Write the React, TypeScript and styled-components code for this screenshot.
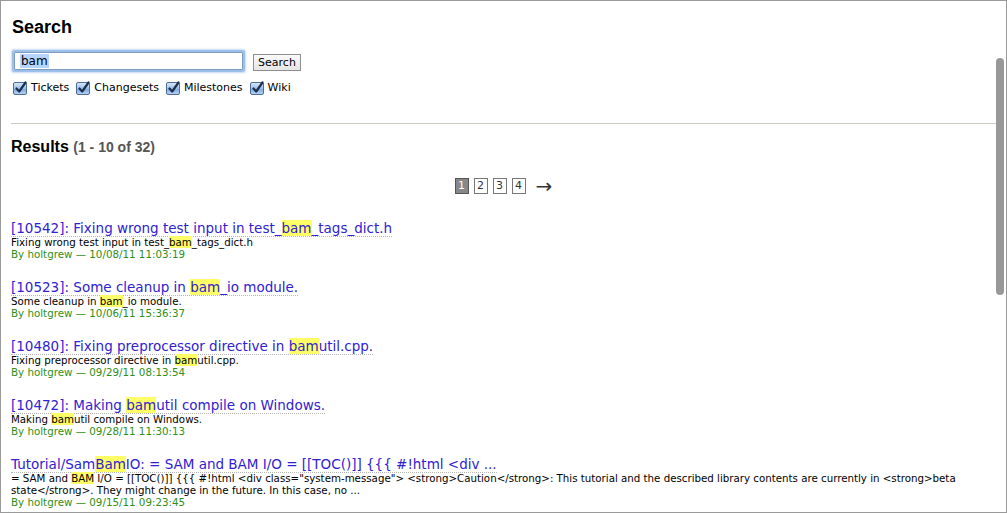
import React from "react";
import styled, { createGlobalStyle } from "styled-components";

const Global = createGlobalStyle`
  html, body { margin: 0; padding: 0; background: #fff; }
  body { font-family: "DejaVu Sans", Verdana, sans-serif; }
`;

const Frame = styled.div`
  position: relative;
  box-sizing: border-box;
  width: 1007px;
  height: 513px;
  overflow: hidden;
  border: 1px solid #9a9a9a;
  padding: 15px 10px 0 10px;
  background: #fff;
  color: #000;
`;

const Heading = styled.h1`
  margin: 0 0 0 1px;
  font: bold 18px/22px "Liberation Sans", Arial, sans-serif;
`;

const FieldRow = styled.div`
  display: flex;
  align-items: flex-start;
  gap: 10px;
  margin: 14px 0 0 3px;
`;

const SearchField = styled.div`
  box-sizing: border-box;
  width: 229px;
  height: 18px;
  border: 1px solid #7d9cbf;
  box-shadow: 0 0 0 2px #9cc0ea, 0 0 2px 3px #c6dbf3;
  border-radius: 1px;
  padding: 2px 0 0 5px;
  font: 12px/12px "DejaVu Sans", Verdana, sans-serif;
  color: #000;
`;

const Selected = styled.span`
  background: #b5d5ff;
  padding: 0 1px;
`;

const SearchButton = styled.button`
  box-sizing: border-box;
  margin-top: 2px;
  width: 48px;
  height: 17px;
  padding: 0;
  border: 1px solid #8e8e8e;
  border-radius: 0;
  background: linear-gradient(#fafafa, #e6e6e6);
  font: 11px/14px "DejaVu Sans", Verdana, sans-serif;
  color: #000;
`;

const Filters = styled.div`
  display: flex;
  align-items: center;
  gap: 7px;
  margin: 10px 0 0 2px;
`;

const Filter = styled.label`
  display: flex;
  align-items: center;
  gap: 4px;
  font: 11px/14px "DejaVu Sans", Verdana, sans-serif;
  color: #000;
`;

const Box = styled.span`
  position: relative;
  box-sizing: border-box;
  width: 14px;
  height: 13px;
  border: 1px solid #4f6e97;
  border-radius: 2px;
  background: linear-gradient(#d6e6f8 0%, #9fc0ea 50%, #7ea7de 55%, #b7d2f3 100%);
  svg { position: absolute; left: 1px; top: -2px; }
`;

const Rule = styled.hr`
  margin: 28px 0 0;
  border: none;
  border-top: 1px solid #cfcbc0;
  height: 0;
`;

const ResultsHeading = styled.h2`
  margin: 13px 0 0;
  font: bold 16px/20px "Liberation Sans", Arial, sans-serif;
`;

const Count = styled.span`
  font-size: 14px;
  color: #555;
`;

const Pager = styled.div`
  display: flex;
  justify-content: center;
  align-items: center;
  gap: 5px;
  margin-top: 21px;
  height: 16px;
  font: 11px/14px "DejaVu Sans", Verdana, sans-serif;
`;

const Page = styled.span<{ $current?: boolean }>`
  box-sizing: border-box;
  width: 14px;
  height: 16px;
  text-align: center;
  border: 1px solid ${(p) => (p.$current ? "#555" : "#777")};
  background: ${(p) => (p.$current ? "#888" : "#fff")};
  color: ${(p) => (p.$current ? "#fff" : "#333")};
`;

const Next = styled.span`
  margin-left: 5px;
  font: 20px/16px "DejaVu Sans", sans-serif;
  color: #333;
`;

const ResultList = styled.dl`
  margin: 26px 0 0;
`;

const Result = styled.div`
  & + & { margin-top: 19px; }
`;

const TitleLine = styled.dt`
  font: 13.5px/16px "DejaVu Sans", Verdana, sans-serif;
`;

const Title = styled.a`
  color: #3022d2;
  text-decoration: none;
  border-bottom: 1px dotted #b5b5b5;
`;

const Hl = styled.span`
  background: #ffff66;
`;

const Excerpt = styled.dd`
  margin: 0;
  font: 10.25px/12px "DejaVu Sans", Verdana, sans-serif;
  color: #000;
`;

const Meta = styled.dd`
  margin: 0;
  font: 10.3px/12px "DejaVu Sans", Verdana, sans-serif;
  color: #2f8e17;
`;

const Scrollbar = styled.div`
  position: absolute;
  right: 2px;
  top: 57px;
  width: 8px;
  height: 237px;
  border-radius: 4px;
  background: #989898;
`;

type Seg = string | { hl: string };

const Text = ({ segs }: { segs: Seg[] }) => (
  <>
    {segs.map((s, i) => (typeof s === "string" ? <React.Fragment key={i}>{s}</React.Fragment> : <Hl key={i}>{s.hl}</Hl>))}
  </>
);

const results: { title: Seg[]; excerpt: Seg[]; date: string }[] = [
  {
    title: ["[10542]: Fixing wrong test input in test_", { hl: "bam" }, "_tags_dict.h"],
    excerpt: ["Fixing wrong test input in test_", { hl: "bam" }, "_tags_dict.h"],
    date: "10/08/11 11:03:19",
  },
  {
    title: ["[10523]: Some cleanup in ", { hl: "bam" }, "_io module."],
    excerpt: ["Some cleanup in ", { hl: "bam" }, "_io module."],
    date: "10/06/11 15:36:37",
  },
  {
    title: ["[10480]: Fixing preprocessor directive in ", { hl: "bam" }, "util.cpp."],
    excerpt: ["Fixing preprocessor directive in ", { hl: "bam" }, "util.cpp."],
    date: "09/29/11 08:13:54",
  },
  {
    title: ["[10472]: Making ", { hl: "bam" }, "util compile on Windows."],
    excerpt: ["Making ", { hl: "bam" }, "util compile on Windows."],
    date: "09/28/11 11:30:13",
  },
  {
    title: ["Tutorial/Sam", { hl: "Bam" }, "IO: = SAM and BAM I/O = [[TOC()]] {{{ #!html <div ..."],
    excerpt: [
      "= SAM and ",
      { hl: "BAM" },
      ' I/O = [[TOC()]] {{{ #!html <div class="system-message"> <strong>Caution</strong>: This tutorial and the described library contents are currently in <strong>beta state</strong>. They might change in the future. In this case, no ...',
    ],
    date: "09/15/11 09:23:45",
  },
];

const Check = () => (
  <Box>
    <svg width="12" height="13" viewBox="0 0 12 13">
      <path d="M1.5 7.5 L4.2 10.5 L10.5 1.5" fill="none" stroke="#1d2f4f" strokeWidth="2.2" strokeLinecap="round" strokeLinejoin="round" />
    </svg>
  </Box>
);

export default function App() {
  return (
    <>
      <Global />
      <Frame>
        <Heading>Search</Heading>
        <form onSubmit={(e) => e.preventDefault()}>
          <FieldRow>
            <SearchField>
              <Selected>bam</Selected>
            </SearchField>
            <SearchButton type="submit">Search</SearchButton>
          </FieldRow>
          <Filters>
            {["Tickets", "Changesets", "Milestones", "Wiki"].map((f) => (
              <Filter key={f}>
                <Check />
                {f}
              </Filter>
            ))}
          </Filters>
        </form>
        <Rule />
        <ResultsHeading>
          Results <Count>(1 - 10 of 32)</Count>
        </ResultsHeading>
        <Pager>
          <Page $current>1</Page>
          <Page>2</Page>
          <Page>3</Page>
          <Page>4</Page>
          <Next>→</Next>
        </Pager>
        <ResultList>
          {results.map((r, i) => (
            <Result key={i}>
              <TitleLine>
                <Title href="#">
                  <Text segs={r.title} />
                </Title>
              </TitleLine>
              <Excerpt>
                <Text segs={r.excerpt} />
              </Excerpt>
              <Meta>By holtgrew — {r.date}</Meta>
            </Result>
          ))}
        </ResultList>
        <Scrollbar />
      </Frame>
    </>
  );
}
